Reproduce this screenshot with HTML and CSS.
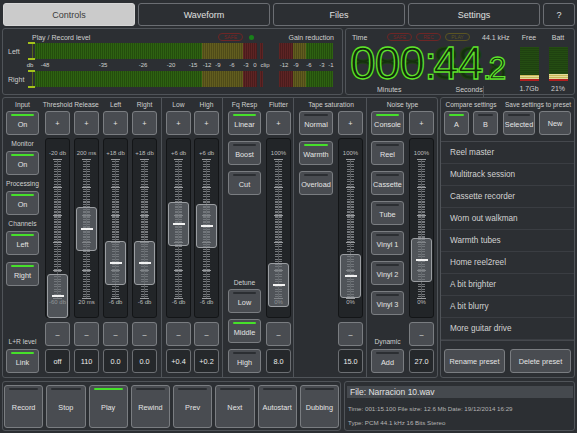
FILE: index.html
```html
<!DOCTYPE html>
<html lang="en">
<head>
    <meta charset="UTF-8">
    <title>Tape Recorder</title>
    <link rel="stylesheet" href="styles.css">
</head>
<body>
    <div class="tabs">
        <div class="tab active">Controls</div>
        <div class="tab">Waveform</div>
        <div class="tab">Files</div>
        <div class="tab">Settings</div>
        <div class="tab help">?</div>
    </div>

    <div class="top">
        <div class="panel meter">
            <div class="mhead">
                <span class="mtitle">Play / Record level</span>
                <span class="lamp red">SAFE</span>
                <span class="dot"></span>
                <span class="gain">Gain reduction</span>
            </div>
            <div class="mrow">
                <span class="mlabel">Left</span>
                <span class="brk"></span>
                <span class="seg g" style="width:167px"></span>
                <span class="seg y" style="width:41px"></span>
                <span class="seg r" style="width:14px"></span>
                <span class="seg r clip" style="width:3px"></span>
                <span class="seg r gr" style="width:14px"></span>
                <span class="seg y" style="width:13px"></span>
                <span class="seg g" style="width:27px"></span>
            </div>
            <div class="mscale">
                <span style="left:27px">db</span>
                <span style="left:42px">-48</span>
                <span style="left:100px">-35</span>
                <span style="left:140px">-26</span>
                <span style="left:168px">-20</span>
                <span style="left:190px">-15</span>
                <span style="left:204px">-12</span>
                <span style="left:215px">-9</span>
                <span style="left:229px">-6</span>
                <span style="left:243px">-3</span>
                <span style="left:252px">0</span>
                <span style="left:262px">clip</span>
                <span style="left:281px">-12</span>
                <span style="left:293px">-9</span>
                <span style="left:306px">-6</span>
                <span style="left:319px">-3</span>
                <span style="left:328px">-1</span>
            </div>
            <div class="mrow">
                <span class="mlabel">Right</span>
                <span class="brk"></span>
                <span class="seg g" style="width:167px"></span>
                <span class="seg y" style="width:41px"></span>
                <span class="seg r" style="width:14px"></span>
                <span class="seg r clip" style="width:3px"></span>
                <span class="seg r gr" style="width:14px"></span>
                <span class="seg y" style="width:13px"></span>
                <span class="seg g" style="width:27px"></span>
            </div>
        </div>

        <div class="panel clock">
            <div class="ctime">
                <div class="chead">
                    <span class="ctitle">Time</span>
                    <span class="lamp red">SAFE</span>
                    <span class="lamp red">REC</span>
                    <span class="lamp amber">PLAY</span>
                    <span class="rate">44.1 kHz</span>
                </div>
                <div class="digits">
                    <div class="ghost"><span class="d">888</span><span class="c">:</span><span class="d">88</span><span class="s">.8</span></div>
                    <div class="lit"><span class="d">000</span><span class="c">:</span><span class="d">44</span><span class="s">.2</span></div>
                </div>
                <div class="cunits">
                    <span>Minutes</span>
                    <span class="sec">Seconds</span>
                </div>
            </div>
            <div class="gauge">
                <span class="glabel">Free</span>
                <div class="gbar"></div>
                <span class="gval">1.7Gb</span>
            </div>
            <div class="gauge">
                <span class="glabel">Batt</span>
                <div class="gbar batt"></div>
                <span class="gval">21%</span>
            </div>
        </div>
    </div>

    <div class="main">
        <div class="panel mixer">
            <!-- dynamics -->
            <div class="sec s1">
                <div class="bcol">
                    <div class="lbl">Input</div>
                    <div class="btn ind on">On</div>
                    <div class="lbl tall">Monitor</div>
                    <div class="btn ind on">On</div>
                    <div class="lbl tall">Processing</div>
                    <div class="btn ind on">On</div>
                    <div class="lbl tall">Channels</div>
                    <div class="btn ind on">Left</div>
                    <div class="btn ind on gap7">Right</div>
                    <div class="lbl foot">L+R level</div>
                    <div class="btn ind on">Link</div>
                </div>
                <div class="strip">
                    <div class="lbl">Threshold</div>
                    <div class="btn">+</div>
                    <div class="track">
                        <span class="tmax">-20 db</span>
                        <span class="tmin">-60 db</span>
                        <div class="scale"></div>
                        <div class="thumb" style="top:135px"></div>
                    </div>
                    <div class="btn">–</div>
                    <div class="val">off</div>
                </div>
                <div class="strip">
                    <div class="lbl">Release</div>
                    <div class="btn">+</div>
                    <div class="track">
                        <span class="tmax">200 ms</span>
                        <span class="tmin">20 ms</span>
                        <div class="scale"></div>
                        <div class="thumb" style="top:68px"></div>
                    </div>
                    <div class="btn">–</div>
                    <div class="val">110</div>
                </div>
                <div class="strip">
                    <div class="lbl">Left</div>
                    <div class="btn">+</div>
                    <div class="track">
                        <span class="tmax">+18 db</span>
                        <span class="tmin">-6 db</span>
                        <div class="scale"></div>
                        <div class="thumb" style="top:102px"></div>
                    </div>
                    <div class="btn">–</div>
                    <div class="val">0.0</div>
                </div>
                <div class="strip">
                    <div class="lbl">Right</div>
                    <div class="btn">+</div>
                    <div class="track">
                        <span class="tmax">+18 db</span>
                        <span class="tmin">-6 db</span>
                        <div class="scale"></div>
                        <div class="thumb" style="top:102px"></div>
                    </div>
                    <div class="btn">–</div>
                    <div class="val">0.0</div>
                </div>
            </div>

            <!-- eq -->
            <div class="sec s2">
                <div class="strip">
                    <div class="lbl">Low</div>
                    <div class="btn">+</div>
                    <div class="track">
                        <span class="tmax">+6 db</span>
                        <span class="tmin">-6 db</span>
                        <div class="scale"></div>
                        <div class="thumb" style="top:63px"></div>
                    </div>
                    <div class="btn">–</div>
                    <div class="val">+0.4</div>
                </div>
                <div class="strip">
                    <div class="lbl">High</div>
                    <div class="btn">+</div>
                    <div class="track">
                        <span class="tmax">+6 db</span>
                        <span class="tmin">-6 db</span>
                        <div class="scale"></div>
                        <div class="thumb" style="top:65px"></div>
                    </div>
                    <div class="btn">–</div>
                    <div class="val">+0.2</div>
                </div>
            </div>

            <!-- response / flutter -->
            <div class="sec s3">
                <div class="bcol">
                    <div class="lbl">Fq Resp</div>
                    <div class="btn ind on">Linear</div>
                    <div class="btn ind gap6">Boost</div>
                    <div class="btn ind gap6">Cut</div>
                    <div class="lbl detune">Detune</div>
                    <div class="btn ind">Low</div>
                    <div class="btn ind on gap6">Middle</div>
                    <div class="btn ind gap6">High</div>
                </div>
                <div class="strip">
                    <div class="lbl">Flutter</div>
                    <div class="btn">+</div>
                    <div class="track">
                        <span class="tmax">100%</span>
                        <span class="tmin">0%</span>
                        <div class="scale"></div>
                        <div class="thumb" style="top:124px"></div>
                    </div>
                    <div class="btn">–</div>
                    <div class="val">8.0</div>
                </div>
            </div>

            <!-- tape saturation -->
            <div class="sec s4">
                <div class="lbl">Tape saturation</div>
                <div class="cols">
                    <div class="bcol">
                        <div class="btn ind">Normal</div>
                        <div class="btn ind on gap6">Warmth</div>
                        <div class="btn ind gap6">Overload</div>
                    </div>
                    <div class="strip">
                        <div class="btn">+</div>
                        <div class="track">
                            <span class="tmax">100%</span>
                            <span class="tmin">0%</span>
                            <div class="scale"></div>
                            <div class="thumb" style="top:115px"></div>
                        </div>
                        <div class="btn">–</div>
                        <div class="val">15.0</div>
                    </div>
                </div>
            </div>

            <!-- noise -->
            <div class="sec s5">
                <div class="lbl">Noise type</div>
                <div class="cols">
                    <div class="bcol">
                        <div class="btn ind on">Console</div>
                        <div class="btn ind gap6">Reel</div>
                        <div class="btn ind gap6">Cassette</div>
                        <div class="btn ind gap6">Tube</div>
                        <div class="btn ind gap6">Vinyl 1</div>
                        <div class="btn ind gap6">Vinyl 2</div>
                        <div class="btn ind gap6">Vinyl 3</div>
                        <div class="lbl foot">Dynamic</div>
                        <div class="btn ind">Add</div>
                    </div>
                    <div class="strip">
                        <div class="btn">+</div>
                        <div class="track">
                            <span class="tmax">100%</span>
                            <span class="tmin">0%</span>
                            <div class="scale"></div>
                            <div class="thumb" style="top:99px"></div>
                        </div>
                        <div class="btn">–</div>
                        <div class="val">27.0</div>
                    </div>
                </div>
            </div>
        </div>

        <div class="panel presets">
            <div class="phead">
                <span class="cmp">Compare settings</span>
                <span class="save">Save settings to preset</span>
            </div>
            <div class="pbtns">
                <div class="btn ind on w25">A</div>
                <div class="btn ind w25">B</div>
                <div class="btn ind w32 sp">Selected</div>
                <div class="btn w32">New</div>
            </div>
            <ul class="plist">
                <li>Reel master</li>
                <li>Multitrack session</li>
                <li>Cassette recorder</li>
                <li>Worn out walkman</li>
                <li>Warmth tubes</li>
                <li>Home reel2reel</li>
                <li>A bit brighter</li>
                <li>A bit blurry</li>
                <li>More guitar drive</li>
            </ul>
            <div class="pfoot">
                <div class="btn">Rename preset</div>
                <div class="btn">Delete preset</div>
            </div>
        </div>
    </div>

    <div class="bottom">
        <div class="panel transport">
            <div class="btn ind">Record</div>
            <div class="btn ind">Stop</div>
            <div class="btn ind on">Play</div>
            <div class="btn ind">Rewind</div>
            <div class="btn ind">Prev</div>
            <div class="btn ind">Next</div>
            <div class="btn ind">Autostart</div>
            <div class="btn ind">Dubbing</div>
        </div>
        <div class="panel fileinfo">
            <div class="fname">File: Narracion 10.wav</div>
            <div class="fline">Time: 001:15.100 File size: 12.6 Mb Date: 19/12/2014 16:29</div>
            <div class="fline">Type: PCM 44.1 kHz 16 Bits Stereo</div>
        </div>
    </div>
</body>
</html>
```

FILE: styles.css
```css
* {
    box-sizing: border-box;
}
body {
    margin: 0;
    width: 577px;
    height: 433px;
    overflow: hidden;
    background-color: #2c2f33;
    color: #cfcfcf;
    font-family: "Liberation Sans", Arial, sans-serif;
    font-size: 7px;
}

/* tabs */
.tabs {
    display: flex;
    gap: 3px;
    padding: 3px 2px 0 3px;
    height: 26px;
}
.tab {
    flex: 0 0 132px;
    height: 23px;
    border: 1px solid #6b6e73;
    border-radius: 3px;
    display: flex;
    align-items: center;
    justify-content: center;
    font-size: 9px;
    color: #e0e0e0;
}
.tab.active {
    background-color: #cbcbcb;
    border-color: #d6d6d6;
    color: #3c3c3c;
}
.tab.help {
    flex: 1;
}

.panel {
    border: 1px solid #505459;
    border-radius: 3px;
}

/* top row */
.top {
    display: flex;
    gap: 2px;
    padding: 2px 2px 0 2px;
    height: 69px;
}
.meter {
    flex: none;
    width: 341px;
    height: 67px;
}
.mhead {
    height: 14px;
    display: flex;
    align-items: center;
    padding: 2px 8px 0 29px;
}
.mtitle {
    width: 186px;
}
.lamp {
    height: 8px;
    border: 1px solid;
    border-radius: 4px;
    font-size: 5px;
    line-height: 6px;
    text-align: center;
    width: 25px;
}
.lamp.red {
    color: #7a2626;
    border-color: #6e2626;
}
.lamp.amber {
    color: #5e5620;
    border-color: #5a5422;
}
.dot {
    width: 5px;
    height: 5px;
    border-radius: 50%;
    background-color: #19801a;
    margin-left: 6px;
}
.gain {
    margin-left: auto;
}
.mrow {
    display: flex;
    align-items: center;
    height: 16px;
}
.mlabel {
    width: 25px;
    padding-left: 5px;
}
.brk {
    width: 7px;
    height: 18px;
    border-top: 2px solid #a4c21c;
    border-bottom: 2px solid #a4c21c;
    background: linear-gradient(90deg, transparent 4px, #55661a 4px 5px, transparent 5px);
}
.seg {
    height: 16px;
}
.seg.g {
    background: repeating-linear-gradient(90deg, #2e6212 0 1px, #244e0d 1px 2px);
}
.seg.y {
    background: repeating-linear-gradient(90deg, #625d1f 0 1px, #4f4b18 1px 2px);
}
.seg.r {
    background: repeating-linear-gradient(90deg, #5e2424 0 1px, #4b1c1c 1px 2px);
}
.seg.clip {
    margin-left: 3px;
}
.seg.gr {
    margin-left: 16px;
}
.mscale {
    position: relative;
    height: 12px;
    font-size: 6px;
    color: #d0d0d0;
}
.mscale span {
    position: absolute;
    top: 3px;
    transform: translateX(-50%);
}

/* clock */
.clock {
    flex: 1;
    min-width: 0;
    height: 67px;
    display: flex;
    padding-right: 5px;
}
.ctime {
    flex: none;
    width: 164px;
}
.chead {
    height: 14px;
    display: flex;
    align-items: center;
    gap: 4px;
    padding: 2px 0 0 6px;
}
.ctitle {
    width: 31px;
}
.rate {
    margin-left: 8px;
}
.digits {
    position: relative;
    height: 37px;
    margin-top: 2px;
    padding-left: 4px;
    font-size: 46px;
    line-height: 37px;
    white-space: nowrap;
}
.digits .d {
    letter-spacing: -0.8px;
}
.digits .c {
    letter-spacing: -4px;
}
.digits .s {
    font-size: 32px;
    letter-spacing: -3px;
}
.ghost {
    color: #15300e;
    -webkit-text-stroke: 1px #1d4113;
}
.lit {
    position: absolute;
    top: 0;
    left: 4px;
    color: #12270b;
    -webkit-text-stroke: 1.3px #5fe22c;
}
.cunits {
    display: flex;
    padding: 4px 0 0 31px;
}
.cunits .sec {
    margin-left: 54px;
}
.gauge {
    flex: none;
    width: 20px;
    margin-left: 9px;
    display: flex;
    flex-direction: column;
    align-items: center;
}
.glabel {
    height: 16px;
    line-height: 18px;
    white-space: nowrap;
}
.gbar {
    width: 19px;
    height: 34px;
    margin-top: 2px;
    background: linear-gradient(to top, #b32020 0 2px, #e4dc9a 2px 3px, #c9b958 3px 4px, #e4dc9a 4px 5px, #c9b958 5px 6px, transparent 6px),
        repeating-linear-gradient(to bottom, #244c12 0 1px, #1f4210 1px 2px);
}
.gbar.batt {
    background: linear-gradient(to top, #b32020 0 2px, #e4dc9a 2px 3px, #c9b958 3px 4px, #e4dc9a 4px 5px, #c9b958 5px 6px, #e4dc9a 6px 7px, transparent 7px),
        repeating-linear-gradient(to bottom, #244c12 0 1px, #1f4210 1px 2px);
}
.gval {
    margin-top: 4px;
    white-space: nowrap;
}

/* main area */
.main {
    display: flex;
    gap: 2px;
    padding: 2px 2px 0 2px;
    height: 283px;
}
.mixer {
    flex: none;
    width: 436px;
    height: 281px;
    display: flex;
}
.sec {
    display: flex;
    flex: none;
    padding-bottom: 4px;
    border-right: 1px solid #505459;
}
.s1 {
    width: 159px;
    padding-left: 3px;
    gap: 4px;
}
.s1 .bcol {
    margin-right: 2px;
}
.s2 {
    width: 61px;
    padding-left: 4px;
    gap: 3px;
}
.s3 {
    width: 71px;
    padding-left: 5px;
    gap: 5px;
}
.s4 {
    width: 73px;
    padding-left: 5px;
    flex-direction: column;
}
.s5 {
    width: 70px;
    padding-left: 4px;
    flex-direction: column;
    border-right: none;
}
.cols {
    display: flex;
    gap: 5px;
    flex: 1;
}
.s4 > .lbl, .s5 > .lbl {
    padding-right: 3px;
}

.bcol {
    display: flex;
    flex-direction: column;
    flex: none;
    width: 33px;
}
.s4 .bcol {
    width: 34px;
}
.strip {
    display: flex;
    flex-direction: column;
    flex: none;
    width: 25px;
}
.lbl {
    height: 13px;
    display: flex;
    align-items: center;
    justify-content: center;
    white-space: nowrap;
    flex: none;
    font-size: 6.7px;
}
.lbl.tall {
    height: 16px;
}
.lbl.foot {
    margin-top: auto;
    height: 15px;
}
.lbl.detune {
    margin-top: auto;
    height: 14px;
}

.btn {
    height: 24px;
    flex: none;
    border: 1px solid #7a7d81;
    border-radius: 3px;
    background-color: #494c51;
    display: flex;
    align-items: center;
    justify-content: center;
    position: relative;
    font-size: 7.3px;
    color: #e4e4e4;
    white-space: nowrap;
}
.btn.ind {
    padding-top: 2px;
}
.btn.ind::before {
    content: "";
    position: absolute;
    top: 2px;
    left: 4px;
    right: 4px;
    height: 2px;
    border-radius: 1px;
    background-color: #2b2e32;
}
.btn.on::before {
    background-color: #46e02a;
}
.gap6 {
    margin-top: 6px;
}
.gap7 {
    margin-top: 7px;
}

/* sliders */
.track {
    position: relative;
    height: 180px;
    margin: 3px 0 4px;
    background-color: #222528;
    border: 1px solid #131517;
    border-radius: 3px;
    flex: none;
}
.tmax, .tmin {
    position: absolute;
    left: -4px;
    right: -4px;
    text-align: center;
    font-size: 6px;
    color: #bdbdbd;
}
.tmax {
    top: 11px;
}
.tmin {
    top: 160px;
}
.scale {
    position: absolute;
    top: 20px;
    left: 50%;
    width: 7px;
    height: 140px;
    margin-left: -3.5px;
    background:
        linear-gradient(90deg, transparent 3px, #5e6165 3px 4px, transparent 4px),
        repeating-linear-gradient(to bottom, #8c8f93 0 1px, transparent 1px 2.5px);
    opacity: 0.8;
}
.scale::before {
    content: "";
    position: absolute;
    left: -1px;
    right: -1px;
    top: 0;
    bottom: 0;
    background: repeating-linear-gradient(to bottom, #b8babd 0 1px, transparent 1px 27.8px);
}
.thumb {
    position: absolute;
    left: 1px;
    right: 1px;
    height: 44px;
    background-color: rgba(112, 116, 121, 0.6);
    border: 1px solid #9b9ea2;
    border-radius: 3px;
}
.thumb::after {
    content: "";
    position: absolute;
    left: 50%;
    top: 50%;
    width: 12px;
    height: 2px;
    margin: -1px 0 0 -6px;
    background-color: #f2f2f2;
}
.val {
    height: 24px;
    flex: none;
    margin-top: 3px;
    border: 1px solid #6c6f73;
    border-radius: 3px;
    background-color: #25282b;
    display: flex;
    align-items: center;
    justify-content: center;
    font-size: 7.3px;
    color: #ececec;
}

/* presets */
.presets {
    flex: 1;
    min-width: 0;
    height: 281px;
    display: flex;
    flex-direction: column;
}
.phead {
    height: 13px;
    display: flex;
    align-items: center;
    padding-left: 3px;
    font-size: 6.5px;
    white-space: nowrap;
}
.cmp {
    width: 54px;
    text-align: center;
}
.save {
    width: 70px;
    margin-left: 5px;
    text-align: center;
}
.pbtns {
    display: flex;
    gap: 4px;
    padding: 0 3px 6px;
    border-bottom: 1px solid #45484d;
}
.w25 {
    width: 25px;
}
.w32 {
    width: 32px;
}
.sp {
    margin-left: 1px;
}
.plist {
    list-style: none;
    margin: 0;
    padding: 0;
    border-bottom: 1px solid #45484d;
}
.plist li {
    height: 22px;
    line-height: 22px;
    padding-left: 9px;
    font-size: 8.2px;
    color: #d2d2d2;
    border-bottom: 1px solid #3a3d42;
}
.pfoot {
    display: flex;
    gap: 5px;
    padding: 0 3px;
    margin-top: auto;
    margin-bottom: 4px;
}
.pfoot .btn {
    flex: 1;
}

/* bottom row */
.bottom {
    display: flex;
    gap: 3px;
    padding: 3px 2px 0 2px;
}
.transport {
    flex: none;
    width: 339px;
    height: 50px;
    display: flex;
    gap: 3px;
    padding: 3px 1px 2px;
}
.transport .btn {
    flex: 1;
    height: 43px;
}
.fileinfo {
    flex: 1;
    min-width: 0;
    height: 50px;
    padding: 4px 1px 0 2px;
}
.fname {
    height: 12px;
    line-height: 12px;
    padding-left: 3px;
    background-color: #45494e;
    font-size: 8.5px;
    color: #e2e2e2;
}
.fline {
    padding-left: 1px;
    font-size: 6.2px;
    color: #b4b4b4;
    margin-top: 7px;
    white-space: nowrap;
}
```
